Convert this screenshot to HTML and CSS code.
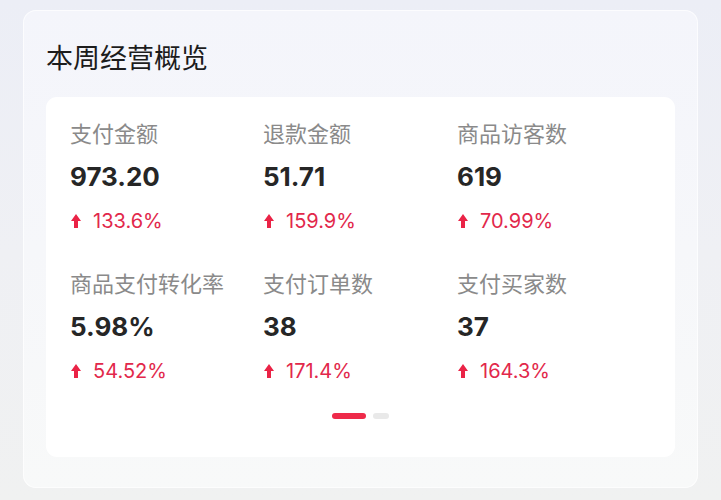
FILE: index.html
```html
<!DOCTYPE html>
<html lang="zh-CN">
<head>
<meta charset="utf-8">
<link rel="stylesheet" href="styles.css">
</head>
<body>
<div class="page">
  <section class="card">
    <h1 class="title">本周经营概览</h1>
    <div class="panel">
      <div class="grid">
        <div class="metric">
          <div class="label">支付金额</div>
          <div class="value">973.20</div>
          <div class="change"><svg class="arrow" viewBox="0 0 10 14" width="10" height="14"><path d="M5 0 L10 7 L7 7 L7 14 L3 14 L3 7 L0 7 Z"/></svg><span>133.6%</span></div>
        </div>
        <div class="metric">
          <div class="label">退款金额</div>
          <div class="value">51.71</div>
          <div class="change"><svg class="arrow" viewBox="0 0 10 14" width="10" height="14"><path d="M5 0 L10 7 L7 7 L7 14 L3 14 L3 7 L0 7 Z"/></svg><span>159.9%</span></div>
        </div>
        <div class="metric">
          <div class="label">商品访客数</div>
          <div class="value">619</div>
          <div class="change"><svg class="arrow" viewBox="0 0 10 14" width="10" height="14"><path d="M5 0 L10 7 L7 7 L7 14 L3 14 L3 7 L0 7 Z"/></svg><span>70.99%</span></div>
        </div>
        <div class="metric">
          <div class="label">商品支付转化率</div>
          <div class="value">5.98%</div>
          <div class="change"><svg class="arrow" viewBox="0 0 10 14" width="10" height="14"><path d="M5 0 L10 7 L7 7 L7 14 L3 14 L3 7 L0 7 Z"/></svg><span>54.52%</span></div>
        </div>
        <div class="metric">
          <div class="label">支付订单数</div>
          <div class="value">38</div>
          <div class="change"><svg class="arrow" viewBox="0 0 10 14" width="10" height="14"><path d="M5 0 L10 7 L7 7 L7 14 L3 14 L3 7 L0 7 Z"/></svg><span>171.4%</span></div>
        </div>
        <div class="metric">
          <div class="label">支付买家数</div>
          <div class="value">37</div>
          <div class="change"><svg class="arrow" viewBox="0 0 10 14" width="10" height="14"><path d="M5 0 L10 7 L7 7 L7 14 L3 14 L3 7 L0 7 Z"/></svg><span>164.3%</span></div>
        </div>
      </div>
      <div class="dots">
        <span class="dot active"></span>
        <span class="dot"></span>
      </div>
    </div>
  </section>
</div>
</body>
</html>
```

FILE: styles.css
```css
html, body {
  margin: 0;
  padding: 0;
}
body {
  width: 721px;
  height: 500px;
  overflow: hidden;
  background: linear-gradient(180deg, #eceef6 0%, #eff0f4 50%, #f0f1f1 100%);
  font-family: "Inter", "Noto Sans CJK SC", sans-serif;
}
.page {
  padding: 10px 23px 12px 23px;
}
.card {
  box-sizing: border-box;
  height: 478px;
  border-radius: 13px;
  background: linear-gradient(180deg, #f4f5fb 0%, #f6f7fa 50%, #f8f9f9 100%);
  box-shadow: inset 0 0 0 1px rgba(255,255,255,0.7);
  padding: 30px 23px 0 23px;
}
.title {
  margin: 0;
  font-family: "Noto Sans CJK SC", sans-serif;
  font-size: 27px;
  line-height: 34px;
  font-weight: 400;
  color: #1c1c1c;
  letter-spacing: 0;
}
.panel {
  margin-top: 23px;
  background: #fff;
  border-radius: 11px;
  padding: 20px 24px 38px 24px;
}
.grid {
  display: grid;
  grid-template-columns: 193px 194px 1fr;
  row-gap: 32px;
}
.metric {
  display: flex;
  flex-direction: column;
}
.label {
  font-family: "Noto Sans CJK SC", sans-serif;
  font-size: 22px;
  line-height: 30px;
  color: #8a8a8a;
}
.value {
  margin-top: 12px;
  font-size: 26px;
  line-height: 36px;
  font-weight: 700;
  color: #262626;
}
.change {
  margin-top: 12px;
  display: flex;
  align-items: center;
  height: 28px;
  color: #e2284b;
  font-size: 20px;
  line-height: 28px;
}
.arrow {
  fill: #ea2346;
  margin-left: 1px;
  margin-right: 12px;
  flex: none;
}
.dots {
  margin-top: 28px;
  display: flex;
  justify-content: center;
  gap: 7px;
}
.dot {
  width: 16px;
  height: 6px;
  border-radius: 3px;
  background: #e9e9e9;
}
.dot.active {
  width: 34px;
  background: #ee2a4a;
}
```
